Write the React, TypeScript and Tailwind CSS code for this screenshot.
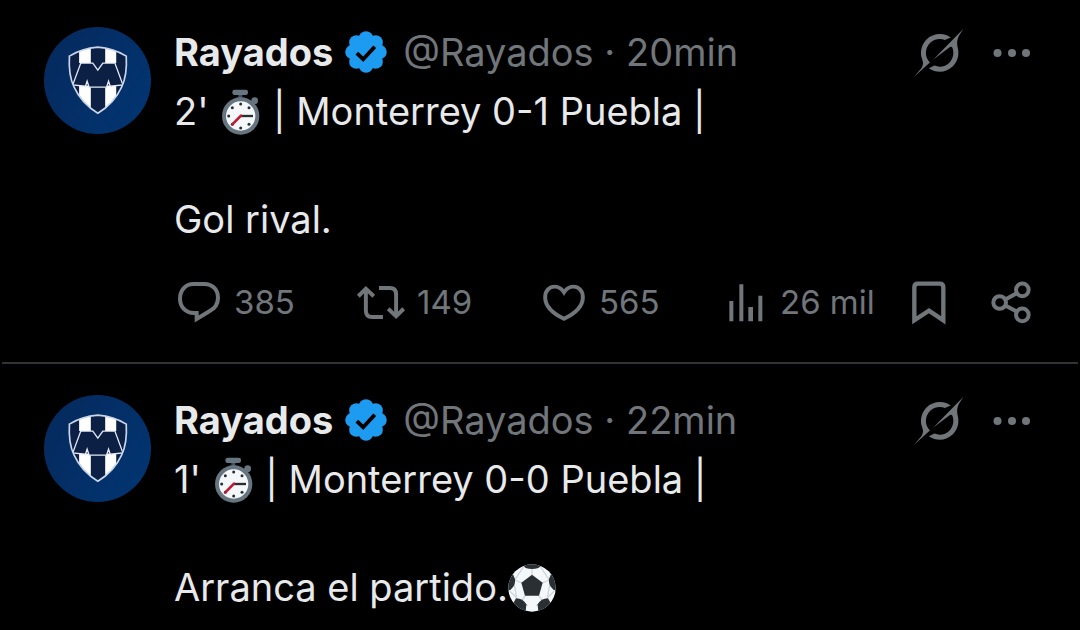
import type { ReactNode } from 'react';

type Tweet = {
  id: number;
  age: string;
  minute: string;
  score: string;
  text: string;
  ball?: boolean;
  stats?: { replies: string; reposts: string; likes: string; views: string };
};

const tweets: Tweet[] = [
  {
    id: 1,
    age: '20min',
    minute: "2'",
    score: '| Monterrey 0-1 Puebla |',
    text: 'Gol rival.',
    stats: { replies: '385', reposts: '149', likes: '565', views: '26 mil' },
  },
  {
    id: 2,
    age: '22min',
    minute: "1'",
    score: '| Monterrey 0-0 Puebla |',
    text: 'Arranca el partido.',
    ball: true,
  },
];

function Avatar() {
  return (
    <svg viewBox="42 37 320 320" className="mt-0.5 size-[107px] shrink-0" role="img" aria-label="Rayados">
      <defs>
        <linearGradient id="avatar-bg" x1="0" y1="0" x2="1" y2="0.6">
          <stop offset="0" stopColor="#052a5c" />
          <stop offset="0.5" stopColor="#042e66" />
          <stop offset="1" stopColor="#02346f" />
        </linearGradient>
        <clipPath id="shield">
          <path d="M203 97C178 99 145 107 118 124C116 158 119 190 132 217C147 250 170 275 203 295C236 275 259 250 274 217C287 190 290 158 288 124C261 107 228 99 203 97Z" />
        </clipPath>
      </defs>
      <circle cx="202" cy="197" r="160" fill="url(#avatar-bg)" />
      <g clipPath="url(#shield)">
        <rect x="110" y="90" width="190" height="210" fill="#0c1f45" />
        <path d="M147 90H182V145H147ZM225 90H258V145H225ZM147 212H182V300H147ZM225 212H258V300H225Z" fill="#fff" />
        <path
          d="M152 145H188L203 166L218 145H254L278 210L240 214L235 199L229 217H177L171 199L166 214L128 210Z"
          fill="#0c1f45"
          stroke="#e4eaf3"
          strokeWidth="4"
        />
      </g>
      <path
        d="M203 97C178 99 145 107 118 124C116 158 119 190 132 217C147 250 170 275 203 295C236 275 259 250 274 217C287 190 290 158 288 124C261 107 228 99 203 97Z"
        fill="none"
        stroke="#c9d5e8"
        strokeWidth="5"
      />
    </svg>
  );
}

function VerifiedIcon() {
  return (
    <svg viewBox="1.4 1.4 19.2 19.2" className="size-[42px] shrink-0" role="img" aria-label="Cuenta verificada">
      <circle cx="11" cy="11" r="8" fill="#1d9bf0" />
      <g fill="#1d9bf0">
        <circle cx="11" cy="4.8" r="3.3" />
        <circle cx="15.4" cy="6.6" r="3.3" />
        <circle cx="17.2" cy="11" r="3.3" />
        <circle cx="15.4" cy="15.4" r="3.3" />
        <circle cx="11" cy="17.2" r="3.3" />
        <circle cx="6.6" cy="15.4" r="3.3" />
        <circle cx="4.8" cy="11" r="3.3" />
        <circle cx="6.6" cy="6.6" r="3.3" />
      </g>
      <path d="M6.8 11.5L9.7 14.3L15 8.6" fill="none" stroke="#000" strokeWidth="1.8" />
    </svg>
  );
}

function GrokIcon() {
  return (
    <svg viewBox="0 0 33 32" className="h-[49px] w-[50px]" fill="currentColor" aria-hidden="true">
      <path d="M12.745 20.54l10.97-8.19c.539-.4 1.307-.244 1.564.38 1.349 3.288.746 7.241-1.938 9.955-2.683 2.714-6.417 3.31-9.83 1.954l-3.728 1.745c5.347 3.697 11.84 2.782 15.898-1.324 3.219-3.255 4.216-7.692 3.284-11.693l.008.009c-1.351-5.878.332-8.227 3.782-13.031L33 0l-4.54 4.59v-.014L12.743 20.544m-2.263 1.987c-3.837-3.707-3.175-9.446.1-12.755 2.42-2.449 6.388-3.448 9.852-1.979l3.72-1.737c-.67-.49-1.53-1.017-2.515-1.387-4.455-1.854-9.789-.931-13.41 2.728-3.483 3.523-4.579 8.94-2.697 13.561 1.405 3.454-.899 5.898-3.22 8.364C1.49 30.2.666 31.074 0 32l10.478-9.466" />
    </svg>
  );
}

function MoreIcon() {
  return (
    <svg viewBox="0 0 38 10" className="h-[10px] w-[38px]" fill="currentColor" aria-hidden="true">
      <circle cx="4.5" cy="6" r="4" />
      <circle cx="19" cy="6" r="4" />
      <circle cx="33" cy="6" r="4" />
    </svg>
  );
}

function Stopwatch() {
  return (
    <svg viewBox="170 190 117 144" className="mx-0.5 inline-block h-12 w-[39px] align-[-11px]" role="img" aria-label="cronómetro">
      <rect x="222" y="205" width="12" height="18" fill="#3f5160" />
      <rect x="204" y="195" width="47" height="16" rx="7" fill="#66757f" />
      <circle cx="271" cy="228" r="10" fill="#66757f" />
      <path d="M256 236L266 226L274 236L264 246Z" fill="#66757f" />
      <circle cx="229" cy="274" r="56" fill="#66757f" />
      <circle cx="229" cy="274" r="44" fill="#f5f8fa" />
      <g fill="#292f33">
        <circle cx="229" cy="238" r="4.5" />
        <circle cx="254" cy="249" r="4.5" />
        <circle cx="254" cy="299" r="4.5" />
        <circle cx="229" cy="310" r="4.5" />
        <circle cx="204" cy="299" r="4.5" />
        <circle cx="193" cy="274" r="4.5" />
        <circle cx="204" cy="249" r="4.5" />
      </g>
      <path d="M229 274H266" stroke="#292f33" strokeWidth="7" />
      <path d="M230 273L204 299" stroke="#be1931" strokeWidth="8" strokeLinecap="round" />
    </svg>
  );
}

function SoccerBall() {
  return (
    <svg viewBox="29 39 144 144" className="inline-block size-12 align-[-11px]" role="img" aria-label="balón">
      <defs>
        <clipPath id="ball">
          <circle cx="101" cy="111" r="71" />
        </clipPath>
      </defs>
      <g clipPath="url(#ball)">
        <rect x="29" y="39" width="144" height="144" fill="#f5f8fa" />
        <path
          d="M101 71V50M132 96L153 87M121 134L133 150M81 134L69 150M70 96L49 87M76 47L49 87M126 47L153 87M34 120L55 140M168 120L147 140M88 165L69 150M114 165L133 150M46 92L55 140M156 92L147 140"
          stroke="#ccd6dd"
          strokeWidth="4"
          fill="none"
        />
        <g fill="#292f33">
          <path d="M101 71L133 95L122 134H80L69 95Z" />
          <path d="M74 43L82 51Q101 57 120 51L130 43L120 34H82Z" />
          <path d="M26 122L38 115Q52 104 50 84L44 70L22 84Z" />
          <path d="M176 122L164 115Q150 104 152 84L158 70L180 84Z" />
          <path d="M53 142Q74 142 84 160L82 182L60 186L44 158Z" />
          <path d="M149 142Q128 142 118 160L120 182L142 186L158 158Z" />
        </g>
      </g>
    </svg>
  );
}

function ReplyIcon() {
  return (
    <svg viewBox="38 38 126 123" className="h-[41px] w-[42px]" fill="none" stroke="currentColor" strokeWidth="12" aria-hidden="true">
      <path d="M84 44H117C142 44 158 62 158 85C158 105 147 118 132 126L94 149V131H86C61 131 44 112 44 88C44 62 61 44 84 44Z" />
    </svg>
  );
}

function RepostIcon() {
  return (
    <svg viewBox="574 48 140 106" className="h-[35px] w-[46px] overflow-visible" fill="none" stroke="currentColor" strokeWidth="12" aria-hidden="true">
      <path d="M578 82L601 59L625 82M601 61V126Q601 145 620 145H653" />
      <path d="M641 57H674Q693 57 693 76V142M669 120L693 143L716 120" />
    </svg>
  );
}

function LikeIcon() {
  return (
    <svg viewBox="38 42 126 118" className="h-[39px] w-[42px]" fill="none" stroke="currentColor" strokeWidth="12" aria-hidden="true">
      <path d="M101 70C92 56 81 53 73 53C57 53 44 65 44 85C44 112 69 135 101 150C133 135 158 112 158 85C158 65 145 53 129 53C121 53 110 56 101 70Z" />
    </svg>
  );
}

function ViewsIcon() {
  return (
    <svg viewBox="596 44 111 114" className="h-[38px] w-[37px]" fill="currentColor" aria-hidden="true">
      <path d="M597 95H609V156H597ZM627 45H639V156H627ZM654 113H668V156H654ZM684 79H696V156H684Z" />
    </svg>
  );
}

function BookmarkIcon() {
  return (
    <svg viewBox="65 37 102 132" className="h-[44px] w-[34px]" fill="none" stroke="currentColor" strokeWidth="13" aria-hidden="true">
      <path d="M72 155V56Q72 45 83 45H148Q159 45 159 56V155L116 126Z" />
    </svg>
  );
}

function ShareIcon() {
  return (
    <svg viewBox="302 37 120 128" className="h-[43px] w-[40px]" fill="none" stroke="currentColor" strokeWidth="12" aria-hidden="true">
      <circle cx="328" cy="101" r="19" />
      <circle cx="396" cy="63" r="19" />
      <circle cx="396" cy="138" r="19" />
      <path d="M345 92L379 73M345 110L379 128" />
    </svg>
  );
}

function Action({ label, count, children }: { label: string; count?: string; children: ReactNode }) {
  return (
    <button type="button" aria-label={label} className="flex items-center gap-3.5 whitespace-nowrap">
      {children}
      {count && <span>{count}</span>}
    </button>
  );
}

function TweetRow({ tweet }: { tweet: Tweet }) {
  const { stats } = tweet;

  return (
    <article className="flex gap-[23px] pr-[49px] pl-11">
      <Avatar />
      <div className="min-w-0 flex-1">
        <header className="mb-[5px] flex h-[54px] items-center leading-[54px] text-[#71767b]">
          <a href="#rayados" className="mr-3 font-bold text-[#e7e9ea]">
            Rayados
          </a>
          <VerifiedIcon />
          <span className="ml-4 whitespace-nowrap">@Rayados · {tweet.age}</span>
          <div className="ml-auto flex items-center gap-[29px]">
            <button type="button" aria-label="Grok">
              <GrokIcon />
            </button>
            <button type="button" aria-label="Más opciones">
              <MoreIcon />
            </button>
          </div>
        </header>

        <p className="leading-[54px] whitespace-pre-line">
          {tweet.minute} <Stopwatch /> {tweet.score}
          {'\n\n'}
          {tweet.text}
          {tweet.ball && <SoccerBall />}
        </p>

        {stats && (
          <div className="mt-8 ml-1 grid h-12 grid-cols-[179fr_186fr_186fr_183fr_79fr_40fr] text-[33px] text-[#71767b]">
            <Action label="Responder" count={stats.replies}>
              <ReplyIcon />
            </Action>
            <Action label="Repostear" count={stats.reposts}>
              <RepostIcon />
            </Action>
            <Action label="Me gusta" count={stats.likes}>
              <LikeIcon />
            </Action>
            <Action label="Visualizaciones" count={stats.views}>
              <ViewsIcon />
            </Action>
            <Action label="Guardar">
              <BookmarkIcon />
            </Action>
            <Action label="Compartir">
              <ShareIcon />
            </Action>
          </div>
        )}
      </div>
    </article>
  );
}

export default function App() {
  return (
    <main className="min-h-screen bg-black pt-[25px] font-['Inter',sans-serif] text-[38px] text-[#e7e9ea]">
      {tweets.map((tweet, i) => (
        <div key={tweet.id}>
          {i > 0 && <hr className="mx-0.5 mt-9 mb-[29px] border-t-2 border-[#2f3336]" />}
          <TweetRow tweet={tweet} />
        </div>
      ))}
    </main>
  );
}
